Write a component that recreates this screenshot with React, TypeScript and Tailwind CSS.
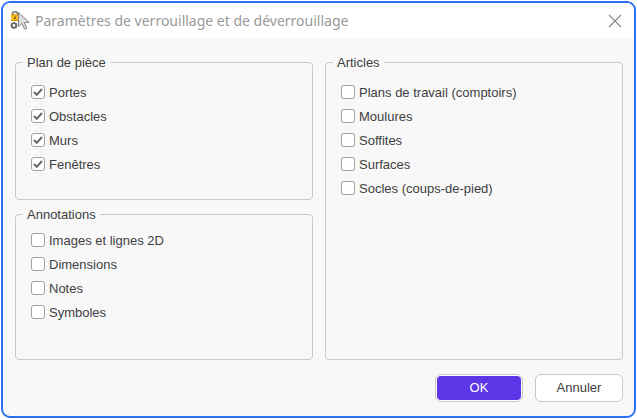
import { useState, type ReactNode } from 'react';

type Option = { id: string; label: string; checked?: boolean };

const planOptions: Option[] = [
  { id: 'portes', label: 'Portes', checked: true },
  { id: 'obstacles', label: 'Obstacles', checked: true },
  { id: 'murs', label: 'Murs', checked: true },
  { id: 'fenetres', label: 'Fenêtres', checked: true },
];

const annotationOptions: Option[] = [
  { id: 'images', label: 'Images et lignes 2D' },
  { id: 'dimensions', label: 'Dimensions' },
  { id: 'notes', label: 'Notes' },
  { id: 'symboles', label: 'Symboles' },
];

const articleOptions: Option[] = [
  { id: 'plans', label: 'Plans de travail (comptoirs)' },
  { id: 'moulures', label: 'Moulures' },
  { id: 'soffites', label: 'Soffites' },
  { id: 'surfaces', label: 'Surfaces' },
  { id: 'socles', label: 'Socles (coups-de-pied)' },
];

function LockIcon() {
  return (
    <svg className="w-5 h-5 shrink-0" viewBox="0 0 20 20" fill="none" aria-hidden="true">
      {/* Padlock */}
      <path d="M2.5 4V2.6Q2.5 .8 5 .8T7.5 2.6V4" stroke="#77716a" strokeWidth="1.6" />
      <rect x="1" y="3.5" width="8" height="6.5" fill="#f8bd16" />
      <path d="M1 4h8M1 9.5h8" stroke="#d3950f" />
      <path d="M5 5.5v2.5" stroke="#6b4e0d" strokeWidth="1.4" />
      {/* Gear */}
      <circle cx="4" cy="14.5" r="2.2" stroke="#606060" strokeWidth="1.6" />
      <path
        d="M4 11v1.3M4 16.7V18M.5 14.5h1.3M6.2 14.5h1.3M1.5 12l1 1M5.5 16l1 1M1.5 17l1-1M5.5 13l1-1"
        stroke="#606060"
        strokeWidth="1.4"
      />
      {/* Cursor */}
      <path
        d="M8.5 1.5V15.5l3.4-3 2.6 5.7 2.4-1.1-2.6-5.4 4.9-.4z"
        fill="#dcdcdc"
        stroke="#858585"
        strokeLinejoin="round"
      />
    </svg>
  );
}

function CheckOption({ option }: { option: Option }) {
  const [checked, setChecked] = useState(Boolean(option.checked));

  return (
    <div className="flex items-center h-6 gap-1">
      <span className="grid w-3.5 h-3.5">
        <input
          id={option.id}
          type="checkbox"
          checked={checked}
          onChange={(e) => setChecked(e.target.checked)}
          className="col-start-1 row-start-1 w-3.5 h-3.5 appearance-none rounded-[3px] border border-[#a3a3a3] bg-white"
        />
        {checked && (
          <svg
            className="col-start-1 row-start-1 w-3.5 h-3.5 pointer-events-none"
            viewBox="0 0 14 14"
            fill="none"
            aria-hidden="true"
          >
            <path d="M3 7l2.8 2.8L11 4" stroke="#6b6b6b" strokeWidth="2" />
          </svg>
        )}
      </span>
      <label htmlFor={option.id} className="pt-0.5 leading-5">
        {option.label}
      </label>
    </div>
  );
}

function Group({ title, className, children }: { title: string; className: string; children: ReactNode }) {
  return (
    <fieldset className={`min-w-0 rounded border border-[#c8c8c8] px-[7px] ${className}`}>
      <legend className="px-1 pt-0.5 leading-[18px]">{title}</legend>
      <div className="px-2">{children}</div>
    </fieldset>
  );
}

export default function App() {
  return (
    <div className="bg-white p-px">
      <div
        role="dialog"
        aria-labelledby="dialog-title"
        className="overflow-hidden rounded-[9px] border-2 border-[#2a72f5] bg-[#f8f8f8] font-['Liberation_Sans',Arial,sans-serif] text-[13px] text-[#404040]"
      >
        <header className="flex items-center gap-1 h-[35px] bg-white pl-[7px] pr-3">
          <LockIcon />
          <h1 id="dialog-title" className="flex-1 pl-px font-['Noto_Sans',sans-serif] text-sm text-[#999999]">
            Paramètres de verrouillage et de déverrouillage
          </h1>
          <button type="button" aria-label="Fermer">
            <svg className="w-3.5 h-3.5" viewBox="0 0 14 14" fill="none" aria-hidden="true">
              <path d="M1 1l12 12M13 1L1 13" stroke="#858585" strokeWidth="1.1" />
            </svg>
          </button>
        </header>

        <form className="py-3.5 pl-3 pr-[11px]" onSubmit={(e) => e.preventDefault()}>
          <div className="grid grid-cols-2 gap-x-3">
            <div className="flex flex-col gap-1">
              <Group title="Plan de pièce" className="pt-2 pb-[23px]">
                {planOptions.map((option) => (
                  <CheckOption key={option.id} option={option} />
                ))}
              </Group>
              <Group title="Annotations" className="pt-1 pb-[35px]">
                {annotationOptions.map((option) => (
                  <CheckOption key={option.id} option={option} />
                ))}
              </Group>
            </div>
            <Group title="Articles" className="pt-2">
              {articleOptions.map((option) => (
                <CheckOption key={option.id} option={option} />
              ))}
            </Group>
          </div>

          <div className="flex justify-end gap-3 pt-3.5">
            <button
              type="submit"
              className="w-22 h-7 rounded-md border border-[#c8c8c8] bg-white p-px text-white"
            >
              <span className="flex items-center justify-center h-full rounded bg-[#5f35e8]">OK</span>
            </button>
            <button type="button" className="w-22 h-7 rounded-md border border-[#c8c8c8] bg-white">
              Annuler
            </button>
          </div>
        </form>
      </div>
    </div>
  );
}
